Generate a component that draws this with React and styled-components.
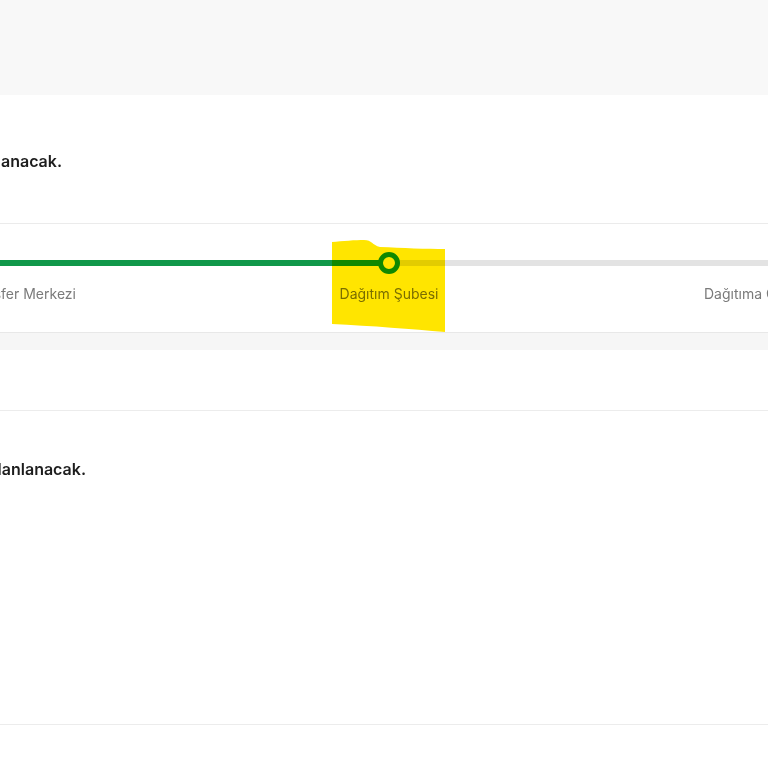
import styled, { createGlobalStyle } from "styled-components";

const GlobalStyle = createGlobalStyle`
  html, body {
    margin: 0;
    padding: 0;
    background: #ffffff;
    font-family: Inter, "Noto Sans", "Liberation Sans", sans-serif;
  }
`;

const Page = styled.div`
  width: 768px;
  height: 768px;
  overflow: hidden;
  display: flex;
  flex-direction: column;
  background: #ffffff;
`;

const TopBand = styled.div`
  height: 95px;
  flex-shrink: 0;
  background: #f8f8f8;
`;

const Section = styled.section`
  padding-top: ${(p) => p.$top}px;
  background: #ffffff;
`;

/* heading is cut off on the left, like the page was scrolled sideways */
const Heading = styled.h3`
  margin: 0;
  width: ${(p) => p.$visible}px;
  height: 20px;
  display: flex;
  justify-content: flex-end;
  overflow: hidden;
  white-space: nowrap;
  font-size: 16px;
  line-height: 20px;
  font-weight: 600;
  color: #1d1d1d;
`;

const HeadingText = styled.span`
  flex-shrink: 0;
`;

const StepperBox = styled.div`
  margin-top: 52px;
  height: 108px;
  border-top: 1px solid #ebebeb;
  border-bottom: 1px solid #e8e8e8;
  overflow: hidden;
`;

const Steps = styled.div`
  display: flex;
  margin-left: -160px;
`;

const Step = styled.div`
  position: relative;
  width: ${(p) => p.$width}px;
  flex-shrink: 0;
  display: flex;
  flex-direction: column;
  align-items: center;
  padding-top: 28px;
`;

const Track = styled.div`
  width: 100%;
  height: 22px;
  display: flex;
  align-items: center;
`;

const Segment = styled.div`
  flex: 1;
  height: 6px;
  background: ${(p) => (p.$done ? "#10984a" : "#e3e3e3")};
`;

const Dot = styled.div`
  width: 22px;
  height: 22px;
  box-sizing: border-box;
  border-radius: 50%;
  border: 5px solid #10984a;
  background: #ffffff;
  margin: 0 -2px;
  position: relative;
  z-index: 1;
`;

const Label = styled.span`
  margin-top: 11px;
  font-size: 14px;
  line-height: 18px;
  color: #7a7a7a;
  white-space: nowrap;
`;

const Marker = styled.svg`
  position: absolute;
  left: ${(p) => p.$left}px;
  top: 14px;
  width: 113px;
  height: 94px;
  mix-blend-mode: multiply;
  pointer-events: none;
  z-index: 2;
`;

const GrayBand = styled.div`
  height: 17px;
  background: #f6f6f6;
`;

const Spacer = styled.div`
  height: 60px;
  border-bottom: 1px solid #ececec;
`;

const Body = styled.div`
  height: 245px;
  border-bottom: 1px solid #ececec;
`;

const steps = [
  { name: "Transfer Merkezi", width: 360, left: true, right: true },
  { name: "Dağıtım Şubesi", width: 378, left: true, right: false, current: true },
  { name: "Dağıtıma Çıkış", width: 346, left: false, right: false },
];

const App = () => {
  return (
    <Page>
      <GlobalStyle />
      <TopBand />

      <Section $top={56}>
        <Heading $visible={62}>
          <HeadingText>Teslimat tarihiniz kargo şubesine ulaştığında planlanacak.</HeadingText>
        </Heading>
        <StepperBox>
          <Steps>
            {steps.map((s) => (
              <Step key={s.name} $width={s.width}>
                <Track>
                  <Segment $done={s.left} />
                  {s.current && <Dot />}
                  <Segment $done={s.right} />
                </Track>
                <Label>{s.name}</Label>
                {s.current && (
                  <Marker
                    $left={s.width / 2 - 57}
                    viewBox="0 0 113 94"
                    preserveAspectRatio="none"
                  >
                    <path
                      d="M0 4 C10 3 24 2 32 2 C40 2 40 7 48 9 C70 10 95 11 113 11 L113 94 C80 91 40 88 0 86 Z"
                      fill="#ffe500"
                    />
                  </Marker>
                )}
              </Step>
            ))}
          </Steps>
        </StepperBox>
        <GrayBand />
        <Spacer />
      </Section>

      <Section $top={48}>
        <Heading $visible={86}>
          <HeadingText>Kurulum tarihiniz teslimattan sonra planlanacak.</HeadingText>
        </Heading>
        <Body />
      </Section>
    </Page>
  );
};

export default App;
